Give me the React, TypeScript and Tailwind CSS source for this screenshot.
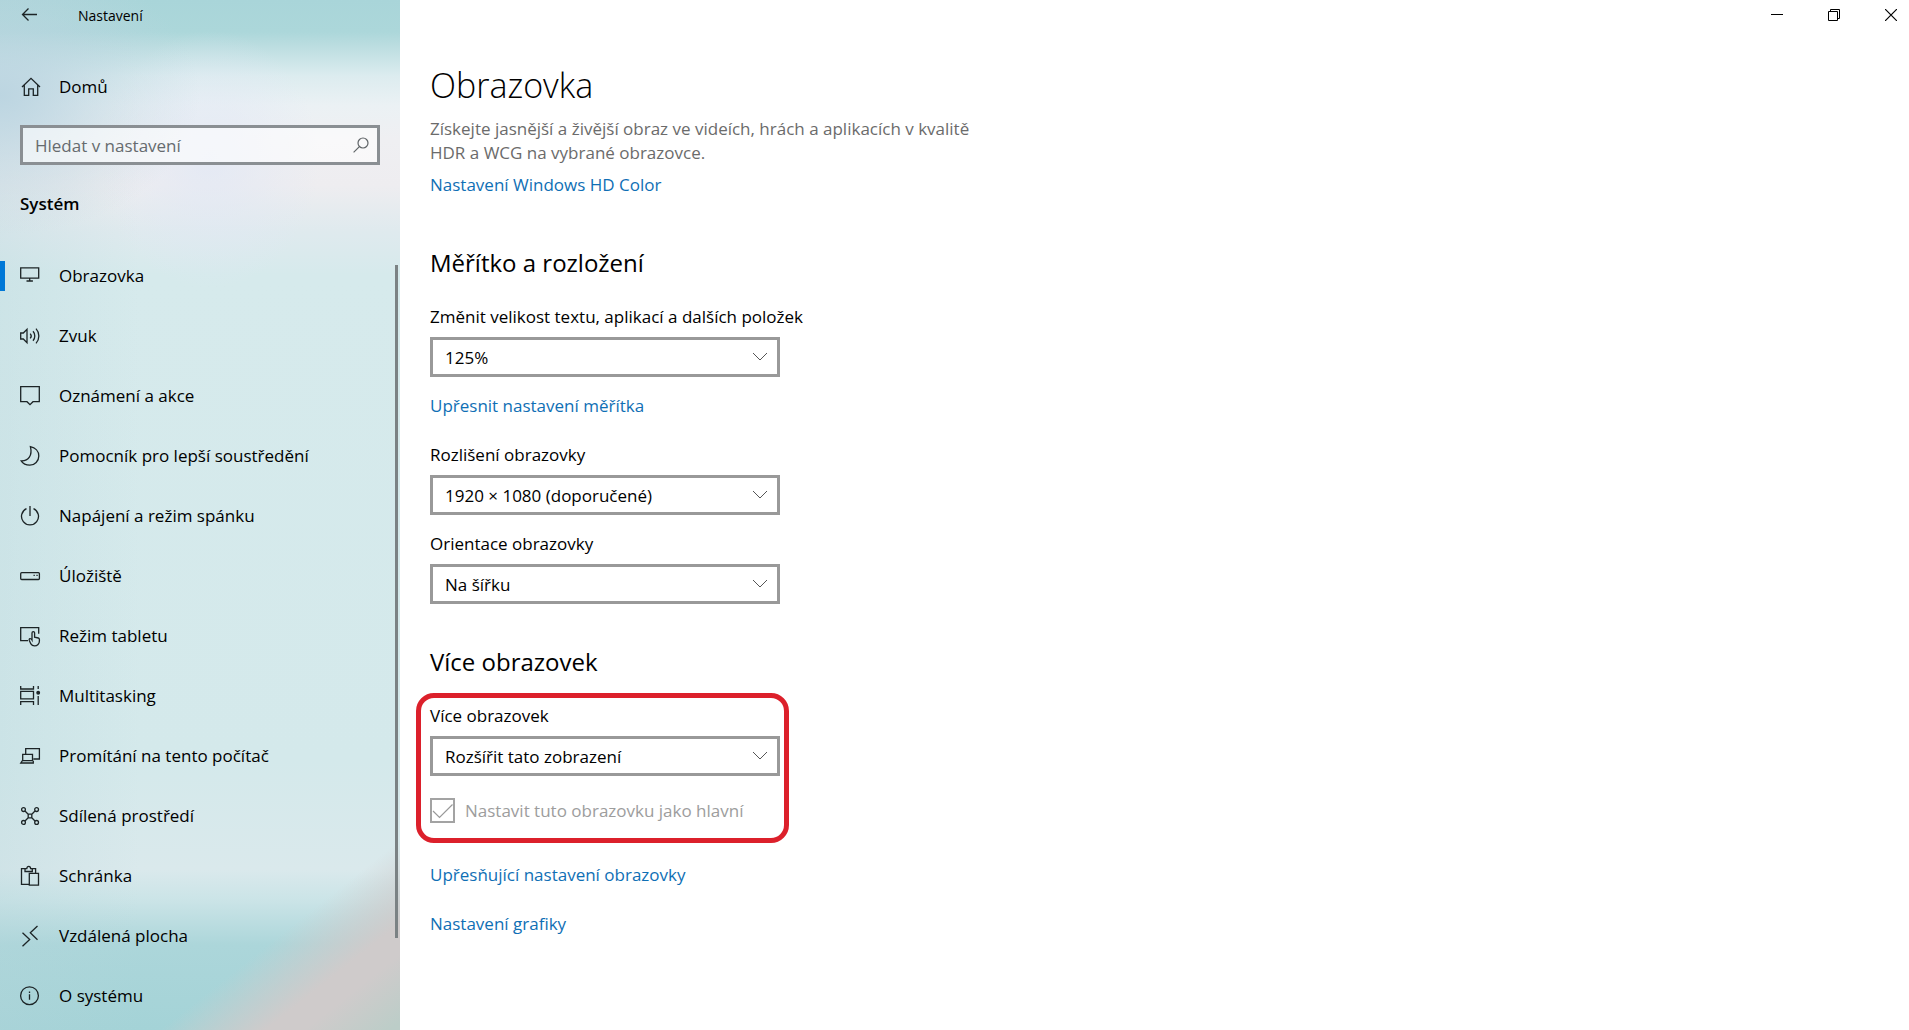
import type { ReactNode } from "react";

function Icon({ children }: { children: ReactNode }) {
  return (
    <svg viewBox="0 1 20 20" className="h-5 w-5 shrink-0 overflow-visible" fill="none" stroke="#1c2426" strokeWidth="1.3" aria-hidden="true">
      {children}
    </svg>
  );
}

const navItems = [
  {
    label: "Obrazovka",
    icon: <path d="M.7 2.8h18v10.4H.7zM9.7 13.2v2.6M6.5 16h6.4" />,
  },
  {
    label: "Zvuk",
    icon: (
      <>
        <path d="M.7 8v6h2.6l3.7 3.7V4.3L3.3 8z" />
        <path d="M10.2 8.6a3.6 3.6 0 0 1 0 4.8M13 6.3a7 7 0 0 1 0 9.4M16 3.6a11 11 0 0 1 0 14.8" />
      </>
    ),
  },
  {
    label: "Oznámení a akce",
    icon: <path d="M.7 1.7h18.6v15H13l-3 3-3-3H.7z" />,
  },
  {
    label: "Pomocník pro lepší soustředění",
    icon: <path d="M10.4 1.6c5 1 8.4 4.7 8.4 9.4 0 5-4 9.2-9 9.2-3.8 0-7-1.7-8.6-4.3C8.5 16.2 12.6 10.5 10.4 1.6z" />,
  },
  {
    label: "Napájení a režim spánku",
    icon: <path d="M10 1v10M6.5 3.7a8.5 8.5 0 1 0 7 0" />,
  },
  {
    label: "Úložiště",
    icon: (
      <>
        <rect x=".7" y="7.7" width="18.7" height="6.8" rx="1" />
        <path d="M13.5 10.4h1.3M16.4 10.4h1.3" />
      </>
    ),
  },
  {
    label: "Režim tabletu",
    icon: (
      <>
        <path d="M8 15.7H.7V2.7h18v6" />
        <path d="M12 15V7.9a1.3 1.3 0 0 1 2.6 0v4.3l3.7.8q1.1.3 1.1 1.5v1.5a4.8 4.8 0 0 1-4.8 4.9q-2.6 0-3.7-2l-1.6-3.5q-.5-1.5.7-1.7Q11.200 13.600 12 15z" />
      </>
    ),
  },
  {
    label: "Multitasking",
    icon: (
      <>
        <path d="M.7 6.3h12.8v7.6H.7zM.7 1v3h12.8V1M.7 20v-3.4h12.8V20M18.2 1v3M18.2 11v9" />
        <circle cx="18.2" cy="7.7" r="1.3" fill="#1c2426" />
      </>
    ),
  },
  {
    label: "Promítání na tento počítač",
    icon: <path d="M5.7 9V3.7h13.7V14h-6M2.7 9.3h9.8v6.4H2.7zM2.4 15.7.8 18h12.5v-2.3" />,
  },
  {
    label: "Sdílená prostředí",
    icon: (
      <>
        <circle cx="3.5" cy="4.6" r="1.9" />
        <circle cx="16.6" cy="4.6" r="1.9" />
        <circle cx="3.5" cy="17.4" r="1.9" />
        <circle cx="16.6" cy="17.4" r="1.9" />
        <path d="M8.2 9.2h3.6v3.6H8.2zM5 6l3.2 3.2M15 6l-3.2 3.2M5 16l3.2-3.2M15 16l-3.2-3.2" />
      </>
    ),
  },
  {
    label: "Schránka",
    icon: (
      <>
        <path d="M9 19.4H1.5V3.7h4M11.6 3.7h4V8" />
        <path d="M5 6.5V3.7h1.8C6.8.6 10.6.6 10.6 3.7h1.7v2.8zM9.3 8.3h9.2v11.9H9.3z" />
      </>
    ),
  },
  {
    label: "Vzdálená plocha",
    icon: <path d="m2.5 7.7 7.2 6.7-7.2 6.8M17.5 1l-7.2 6.7 7.2 7" />,
  },
  {
    label: "O systému",
    icon: (
      <>
        <circle cx="9.5" cy="10.7" r="8.9" />
        <path d="M9.5 9.3v5.5M9.5 6.4v1.5" />
      </>
    ),
  },
];

function SelectField({ id, label, value }: { id: string; label: string; value: string }) {
  return (
    <div className="flex flex-col gap-2">
      <label htmlFor={id}>{label}</label>
      <div className="relative w-[350px]">
        <select id={id} className="block h-10 w-full appearance-none border-3 border-[#999999] bg-white pt-0.5 pr-10 pl-3">
          <option>{value}</option>
        </select>
        <svg viewBox="0 0 16 10" className="pointer-events-none absolute top-[15px] right-3 h-[10px] w-4" fill="none" stroke="#555" aria-hidden="true">
          <path d="m1 1 7 7 7-7" />
        </svg>
      </div>
    </div>
  );
}

function SettingsLink({ children }: { children: ReactNode }) {
  return (
    <a href="#" className="self-start text-[#0f6fb5]">
      {children}
    </a>
  );
}

// Acrylic wallpaper tint behind the navigation
const acrylic =
  "bg-[linear-gradient(to_bottom_right,#cfcbcb00_50%,#cfcbcb90_62%,#cfcbcbff_72%,#cfcbcbff_80%,#bccdc8_98%),radial-gradient(ellipse_200px_140px_at_0px_95px,#bcd5e1_0%,#bcd5e180_45%,#bcd5e100_100%),linear-gradient(90deg,#b4d4da48_0px,#b4d4da00_140px),radial-gradient(ellipse_110px_130px_at_210px_160px,#e1e8f5c0_0%,#e1e8f500_100%),linear-gradient(180deg,#a9d5d9_0px,#acd7da_32px,#c2e0e3_52px,#dcecef_76px,#ebf1f4_105px,#efeff2_140px,#eeedf0_185px,#dfeaee_232px,#d6eaec_275px,#d4e9eb_760px,#dae9ec_870px,#cbe4e7_900px,#acd6da_945px,#a4d3d7_1030px)] bg-[length:240px_190px,auto,auto,auto,auto] bg-[position:right_bottom,0_0,0_0,0_0,0_0] bg-no-repeat";

function Sidebar() {
  return (
    <aside className={`relative w-[400px] shrink-0 ${acrylic}`}>
      <div className="flex h-8 items-center pl-5">
        <button type="button" aria-label="Zpět">
          <svg viewBox="0 0 20 20" className="h-5 w-5" fill="none" stroke="#1c2426" strokeWidth="1.3" aria-hidden="true">
            <path d="M17 8.500H2.5M8.5 2.5l-6 6 6 6" />
          </svg>
        </button>
        <span className="pl-[38px] text-sm">Nastavení</span>
      </div>

      <a href="#" className="mt-[39px] flex h-8 items-center gap-[19px] pl-5">
        <Icon>
          <path d="M2 11l9-8.7L20 11M4.3 9v10.3h4.4v-6.5h4.6v6.5h4.4V9" />
        </Icon>
        Domů
      </a>

      <div className="relative mx-5 mt-[22px]">
        <input
          type="text"
          aria-label="Hledat v nastavení"
          placeholder="Hledat v nastavení"
          className="block h-10 w-full border-3 border-[#8a8f93] bg-white/60 px-3 placeholder:text-[#666b6e]"
        />
        <svg viewBox="0 0 16 16" className="pointer-events-none absolute top-3 right-[11px] h-4 w-4" fill="none" stroke="#5f6467" strokeWidth="1.2" aria-hidden="true">
          <circle cx="10" cy="6" r="5" />
          <path d="M6.4 9.6.6 15.4" />
        </svg>
      </div>

      <h2 className="mt-[27px] pl-5 font-semibold">Systém</h2>

      <nav className="mt-[30px]">
        {navItems.map((item, i) => (
          <a key={item.label} href="#" className="flex h-[60px] items-center">
            <span className={i === 0 ? "h-[30px] w-[5px] bg-[#0078d7]" : "w-[5px]"} />
            <span className="flex items-center gap-[19px] pl-[15px]">
              <Icon>{item.icon}</Icon>
              {item.label}
            </span>
          </a>
        ))}
      </nav>
      <div className="absolute top-[265px] right-[2px] bottom-[92px] w-[3px] bg-[#7b8284]" />
    </aside>
  );
}

function WindowControls() {
  return (
    <div className="flex h-8 items-center justify-end gap-[45px] pr-3 pb-[3px]">
      <button type="button" aria-label="Minimalizovat">
        <svg viewBox="0 0 12 12" className="h-3 w-3" fill="none" stroke="#000" aria-hidden="true">
          <path d="M0 5.5h12" />
        </svg>
      </button>
      <button type="button" aria-label="Obnovit">
        <svg viewBox="0 0 12 12" className="h-3 w-3" fill="none" stroke="#000" aria-hidden="true">
          <path d="M.5 2.5h9v9h-9zM2.5 2.5v-2h9v9h-2" />
        </svg>
      </button>
      <button type="button" aria-label="Zavřít">
        <svg viewBox="0 0 12 12" className="h-3 w-3" fill="none" stroke="#000" strokeWidth="1.2" aria-hidden="true">
          <path d="m0 0 12 12M12 0 0 12" />
        </svg>
      </button>
    </div>
  );
}

export default function App() {
  return (
    <div className="flex min-h-screen bg-white font-['Open_Sans','Noto_Sans',sans-serif] text-[17px] leading-6 text-black">
      <Sidebar />
      <div className="min-w-0 flex-1">
        <WindowControls />
        <main className="flex flex-col pt-[29px] pl-[30px]">
          <h1 className="text-[34px] leading-[48px] font-light">Obrazovka</h1>
          <p className="mt-2 max-w-[550px] text-[#6b6b6b]">
            Získejte jasnější a živější obraz ve videích, hrách a aplikacích v kvalitě
            <br />
            HDR a WCG na vybrané obrazovce.
          </p>
          <div className="mt-2 flex">
            <SettingsLink>Nastavení Windows HD Color</SettingsLink>
          </div>

          <section className="mt-[50px] flex flex-col gap-[17px]">
            <h2 className="mb-[9px] text-2xl leading-8">Měřítko a rozložení</h2>
            <SelectField id="scale" label="Změnit velikost textu, aplikací a dalších položek" value="125%" />
            <SettingsLink>Upřesnit nastavení měřítka</SettingsLink>
            <div className="mt-2 flex flex-col gap-[17px]">
              <SelectField id="resolution" label="Rozlišení obrazovky" value="1920 × 1080 (doporučené)" />
              <SelectField id="orientation" label="Orientace obrazovky" value="Na šířku" />
            </div>
          </section>

          <section className="mt-[42px] flex flex-col">
            <h2 className="text-2xl leading-8">Více obrazovek</h2>
            <div className="mt-[15px] -ml-[14px] w-[373px] rounded-[18px] border-5 border-[#dc202b] pt-[6px] pb-[15px] pl-[9px]">
              <SelectField id="displays" label="Více obrazovek" value="Rozšířit tato zobrazení" />
              <label className="mt-[22px] flex items-center gap-[10px] text-[#9d9d9d]">
                <span className="relative">
                  <input type="checkbox" defaultChecked disabled className="block h-[25px] w-[25px] appearance-none border-2 border-[#a3a3a3]" />
                  <svg viewBox="0 0 25 25" className="pointer-events-none absolute inset-0" fill="none" stroke="#999" strokeWidth="1.2" aria-hidden="true">
                    <path d="m3 13 6.5 6.5L22.5 6.5" />
                  </svg>
                </span>
                Nastavit tuto obrazovku jako hlavní
              </label>
            </div>
            <div className="mt-5 flex flex-col gap-[25px]">
              <SettingsLink>Upřesňující nastavení obrazovky</SettingsLink>
              <SettingsLink>Nastavení grafiky</SettingsLink>
            </div>
          </section>
        </main>
      </div>
    </div>
  );
}
